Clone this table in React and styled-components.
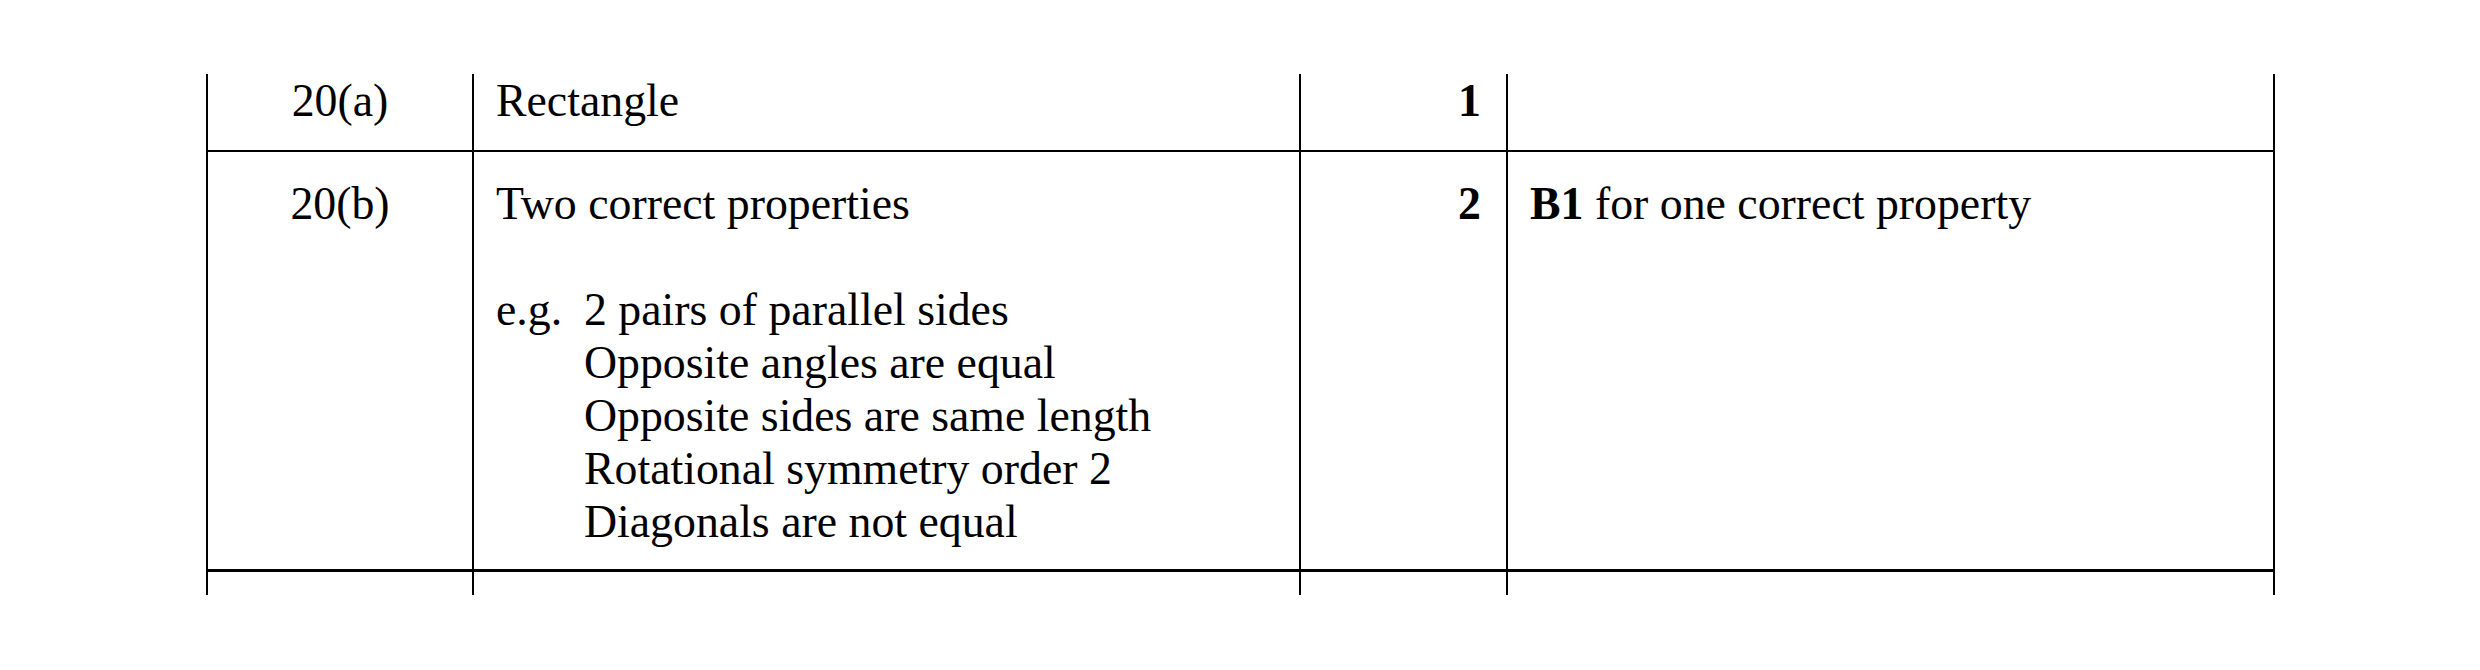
import React from "react";
import styled, { createGlobalStyle } from "styled-components";

const Global = createGlobalStyle`
  html, body { margin: 0; padding: 0; background: #fff; }
  body { font-family: "Liberation Serif", "Times New Roman", serif; color: #000; }
`;

const Page = styled.div`
  padding: 74px 0 0 206px;
`;

const Table = styled.div`
  display: flex;
  flex-direction: column;
  width: 2069px;
`;

const Row = styled.div`
  display: grid;
  grid-template-columns: 266px 827px 207px 769px;
  border-bottom: ${(p) => (p.$border ? `${p.$border}px solid #000` : "none")};
`;

const Cell = styled.div`
  box-sizing: border-box;
  border-left: 2px solid #000;
  border-right: ${(p) => (p.$last ? "2px solid #000" : "none")};
  padding: ${(p) => p.$pad || "0"};
  text-align: ${(p) => p.$align || "left"};
  font-size: 45.8px;
  line-height: 53px;
  font-weight: ${(p) => (p.$bold ? 700 : 400)};
  min-height: ${(p) => p.$h || 0}px;
`;

const Line = styled.div`
  margin-bottom: ${(p) => (p.$gap ? "53px" : "0")};
`;

const Example = styled.div`
  display: grid;
  grid-template-columns: 88px auto;
`;

const List = styled.div`
  display: flex;
  flex-direction: column;
`;

const items = [
  "2 pairs of parallel sides",
  "Opposite angles are equal",
  "Opposite sides are same length",
  "Rotational symmetry order 2",
  "Diagonals are not equal",
];

export default function App() {
  return (
    <>
      <Global />
      <Page>
        <Table>
          <Row $border={2}>
            <Cell $align="center" $pad="0 0 23px 0">20(a)</Cell>
            <Cell $pad="0 0 23px 22px">Rectangle</Cell>
            <Cell $align="right" $bold $pad="0 25px 23px 0">1</Cell>
            <Cell $last $pad="0 0 23px 22px"></Cell>
          </Row>
          <Row $border={3}>
            <Cell $align="center" $pad="25px 0 21px 0">20(b)</Cell>
            <Cell $pad="25px 0 21px 22px">
              <Line $gap>Two correct properties</Line>
              <Example>
                <span>e.g.</span>
                <List>
                  {items.map((t) => (
                    <span key={t}>{t}</span>
                  ))}
                </List>
              </Example>
            </Cell>
            <Cell $align="right" $bold $pad="25px 25px 21px 0">2</Cell>
            <Cell $last $pad="25px 0 21px 22px">
              <b>B1</b> for one correct property
            </Cell>
          </Row>
          <Row>
            <Cell $h={23} />
            <Cell $h={23} />
            <Cell $h={23} />
            <Cell $last $h={23} />
          </Row>
        </Table>
      </Page>
    </>
  );
}
